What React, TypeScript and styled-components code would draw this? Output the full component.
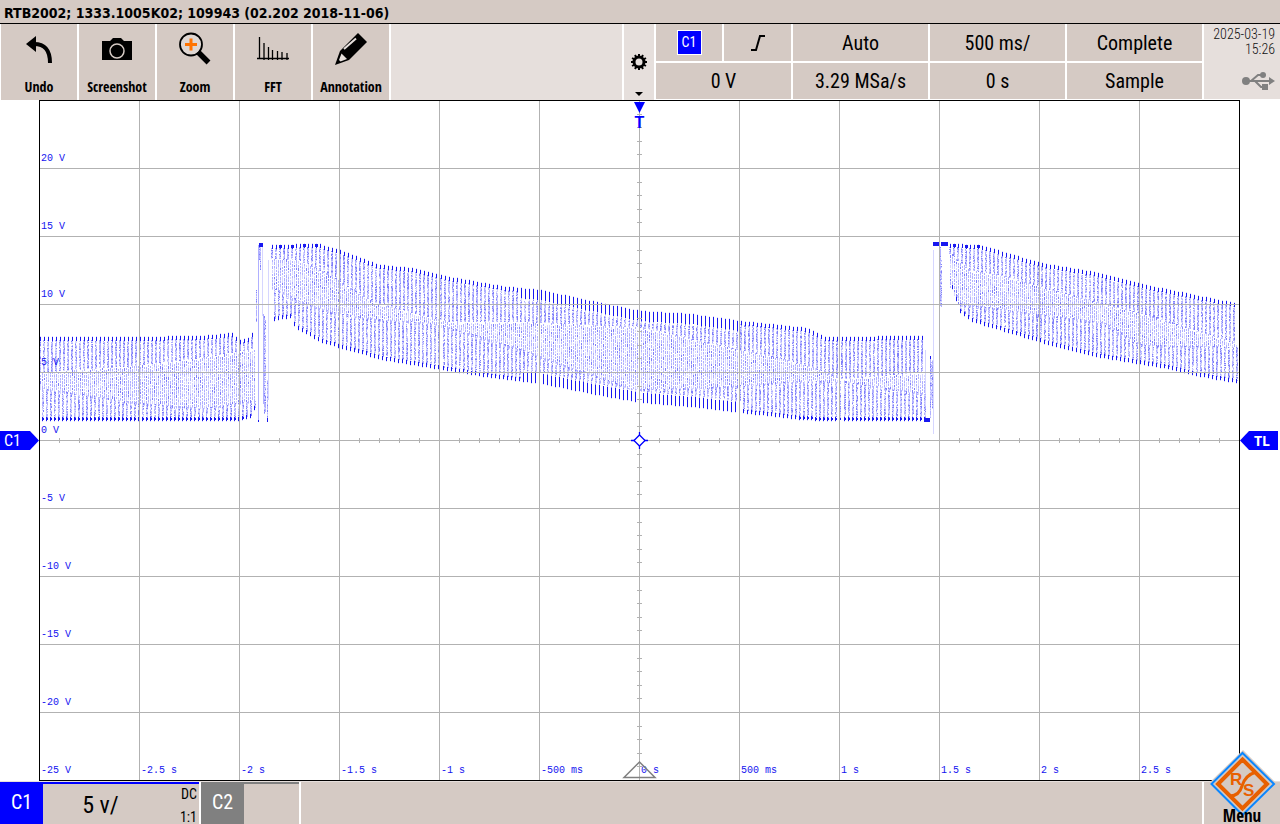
import React from "react";
import styled, { createGlobalStyle } from "styled-components";

const tan = "#d5cac4";
const pale = "#e6dfdc";
const blue = "#0000ff";
const grey = "#808080";
const orange = "#e86000";
const narrow = '"Roboto Condensed", "Arial Narrow", sans-serif';
const narrowBold = '"Open Sans Condensed", "Arial Narrow", sans-serif';

const Global = createGlobalStyle`
  * { box-sizing: border-box; }
  body { margin: 0; background: #fff; color: #000; font-family: ${narrow}; }
  button { font-family: inherit; color: inherit; border: 0; padding: 0; margin: 0; border-radius: 0; }
`;

const Screen = styled.div`
  display: flex;
  flex-direction: column;
  min-height: 100vh;
`;

const TitleBar = styled.h1`
  margin: 0;
  height: 24px;
  padding: 3px 4px 0;
  border-bottom: 1px solid #000;
  background: ${tan};
  font: bold 14px/20px "DejaVu Sans Condensed", Arial, sans-serif;
  white-space: nowrap;
`;

const Header = styled.header`
  display: flex;
  gap: 2px;
  height: 76px;
`;

const Tools = styled.nav`
  display: flex;
  gap: 2px;
  padding-left: 1px;
`;

const ToolButton = styled.button`
  display: flex;
  flex-direction: column;
  align-items: center;
  justify-content: space-between;
  width: 76px;
  padding: 8px 0 4px;
  background: ${tan};
  font-family: ${narrowBold};
  font-size: 14px;
  font-weight: bold;
  line-height: 18px;
`;

const Spare = styled.div`
  flex: 1;
  background: ${pale};
`;

const GearButton = styled.button`
  display: flex;
  flex-direction: column;
  align-items: center;
  justify-content: flex-end;
  gap: 22px;
  width: 30px;
  padding-bottom: 4px;
  background: ${pale};
`;

const Settings = styled.div`
  display: grid;
  grid-template-columns: repeat(4, 135px);
  grid-template-rows: 37px 36px;
  gap: 2px;
`;

const Pair = styled.div`
  display: grid;
  grid-template-columns: 66px 1fr;
  gap: 2px;
`;

const Setting = styled.button`
  display: flex;
  align-items: center;
  justify-content: center;
  background: ${tan};
  font-size: 20px;
  line-height: 24px;
`;

const SourceBadge = styled.span`
  width: 25px;
  height: 25px;
  border: 1px solid #fff;
  background: ${blue};
  color: #fff;
  font-size: 14px;
  line-height: 23px;
`;

const Status = styled.div`
  display: flex;
  flex-direction: column;
  justify-content: space-between;
  align-items: flex-end;
  width: 76px;
  height: 75px;
  padding: 3px 5px 8px 0;
  background: ${pale};
  color: #111;
  font-size: 14px;
  font-weight: 300;
  line-height: 15px;
  text-align: right;
  white-space: nowrap;
`;

const PlotRow = styled.main`
  display: flex;
  align-items: center;
`;

const Gutter = styled.div<{ $width: number }>`
  flex: none;
  width: ${(p) => p.$width}px;
`;

const Marker = styled.div<{ $side: "left" | "right" }>`
  width: ${(p) => (p.$side === "left" ? 39 : 38)}px;
  height: 19px;
  background: ${blue};
  color: #fff;
  font-family: ${(p) => (p.$side === "left" ? narrow : '"Open Sans", sans-serif')};
  font-size: ${(p) => (p.$side === "left" ? 16 : 14)}px;
  font-weight: ${(p) => (p.$side === "left" ? "normal" : "bold")};
  line-height: 19px;
  padding: ${(p) => (p.$side === "left" ? "0 0 0 4px" : "0 0 0 14px")};
  clip-path: ${(p) =>
    p.$side === "left"
      ? "polygon(0 0, 30px 0, 100% 50%, 30px 100%, 0 100%)"
      : "polygon(0 50%, 9px 0, 100% 0, 100% 100%, 9px 100%)"};
`;

const Plot = styled.svg`
  display: block;
  flex: 1;
  min-width: 0;
  height: auto;
`;

const AxisText = styled.text`
  fill: #1414f0;
  font-family: "Liberation Mono", monospace;
  font-size: 10px;
  white-space: pre;
`;

const Footer = styled.footer`
  display: flex;
  gap: 2px;
  flex: 1;
  min-height: 43px;
  border-top: 1px solid ${pale};
`;

const Channel = styled.button<{ $color: string; $width: number }>`
  display: flex;
  width: ${(p) => p.$width}px;
  border-top: 2px solid ${(p) => p.$color};
  background: ${tan};
`;

const ChannelName = styled.span<{ $color: string }>`
  width: 43px;
  height: 100%;
  background: ${(p) => p.$color};
  color: #fff;
  font-size: 20px;
  line-height: 36px;
`;

const Scale = styled.span`
  flex: 1;
  padding-right: 22px;
  font-size: 24px;
  line-height: 42px;
`;

const Coupling = styled.span`
  display: flex;
  flex-direction: column;
  justify-content: space-between;
  height: 100%;
  padding: 2px 2px 1px 0;
  font-size: 14px;
  line-height: 16px;
  text-align: right;
`;

const FooterSpace = styled.div`
  flex: 1;
  background: ${tan};
`;

const MenuButton = styled.button`
  position: relative;
  width: 76px;
  background: ${tan};
`;

const MenuLogo = styled.svg`
  position: absolute;
  left: 0;
  bottom: 0;
`;

const MenuText = styled.span`
  position: absolute;
  left: 0;
  right: 0;
  bottom: 0;
  font-family: ${narrowBold};
  font-size: 17px;
  font-weight: bold;
  line-height: 20px;
`;

type Points = [number, number][];

/** Linear interpolation along a list of [x, y] points. */
function at(points: Points, x: number): number {
  if (x <= points[0][0]) return points[0][1];
  for (let i = 1; i < points.length; i++) {
    const [x1, y1] = points[i];
    if (x <= x1) {
      const [x0, y0] = points[i - 1];
      return y0 + ((y1 - y0) * (x - x0)) / (x1 - x0);
    }
  }
  return points[points.length - 1][1];
}

interface Burst {
  from: number;
  to: number;
  top: Points;
  coreTop: Points;
  coreBottom: Points;
  bottom: Points;
}

const bursts: Burst[] = [
  {
    from: 0,
    to: 215,
    top: [[0, 237], [90, 237], [160, 236], [194, 233], [200, 240], [211, 238], [217, 222]],
    coreTop: [[0, 272], [90, 266], [160, 258], [217, 248]],
    coreBottom: [[0, 288], [90, 302], [160, 308], [217, 300]],
    bottom: [[0, 321], [196, 321], [210, 318], [217, 300]],
  },
  {
    from: 229,
    to: 884,
    top: [[229, 145], [280, 144], [300, 150], [340, 165], [371, 168], [411, 177], [461, 186], [501, 190], [561, 203], [601, 211], [651, 214], [701, 221], [768, 228], [786, 237], [886, 236]],
    coreTop: [[229, 158], [260, 160], [290, 175], [334, 202], [371, 212], [414, 222], [491, 222], [601, 227], [661, 241], [701, 250], [741, 258], [781, 270], [801, 279], [886, 272]],
    coreBottom: [[229, 186], [260, 202], [290, 212], [334, 219], [391, 223], [431, 234], [481, 250], [521, 265], [551, 274], [591, 289], [661, 288], [701, 285], [761, 281], [801, 281], [886, 294]],
    bottom: [[229, 224], [235, 220], [250, 218], [254, 228], [281, 243], [341, 260], [401, 270], [451, 278], [501, 284], [561, 296], [601, 303], [661, 308], [701, 313], [761, 320], [786, 321], [886, 321]],
  },
  {
    from: 907,
    to: 1198,
    top: [[907, 144], [940, 145], [961, 151], [1001, 163], [1061, 173], [1121, 188], [1200, 204]],
    coreTop: [[907, 150], [930, 170], [961, 175], [1031, 195], [1101, 213], [1200, 244]],
    coreBottom: [[907, 180], [920, 204], [1061, 222], [1101, 245], [1200, 247]],
    bottom: [[907, 187], [913, 190], [917, 212], [931, 222], [961, 231], [1001, 243], [1061, 258], [1121, 268], [1161, 277], [1200, 284]],
  },
];

const shades = ["#d6d6ff", "#b0b0ff", "#8080f8", "#1818f0"];

const PERIOD = 4.01;

/** Builds one path per shade; every sample is a short vertical pixel run. */
function buildTrace(): string[] {
  const parts: string[][] = shades.map(() => []);
  let seed = 7;
  const rand = () => {
    seed = (seed * 1103515245 + 12345) & 0x7fffffff;
    return (seed >> 8) / 0x7fffff;
  };
  const dot = (shade: number, x: number, y: number, h = 1, w = 1) => {
    parts[shade].push(`M${x} ${Math.round(y)}h${w}v${h}h-${w}z`);
  };
  const noisy = (x: number, y0: number, y1: number, density: number) => {
    for (let y = Math.round(y0); y < y1; y++) {
      if (rand() > density) continue;
      const k = rand();
      dot(k < 0.34 ? 0 : k < 0.8 ? 1 : 2, x, y);
    }
  };
  const dashes = (x: number, y0: number, y1: number) => {
    let y = Math.round(y0 + rand() * 3);
    while (y < y1) {
      const k = rand();
      const h = rand() < 0.7 ? 2 : 3;
      dot(k < 0.25 ? 0 : k < 0.88 ? 1 : 2, x, y, h);
      y += h;
      if (rand() < 0.5) dot(0, x, y);
      y += 1;
    }
  };

  for (const b of bursts) {
    for (let n = Math.ceil(b.from / PERIOD); n * PERIOD < b.to; n++) {
      const x = Math.round(n * PERIOD - 0.5) + 1;
      const top = at(b.top, x);
      const coreTop = at(b.coreTop, x);
      const coreBottom = at(b.coreBottom, x);
      const bottom = at(b.bottom, x);
      const thin = x > 480 && x < 700;
      const tip = thin ? 10 : 4;

      dot(0, x, top - 1, 1);
      dot(3, x, top, tip);
      if (top < 145.5 && n % 3 === 0) dot(3, x - 1, top, 3, 3);
      noisy(x, top + tip, coreTop, 0.95);
      noisy(x - 1, top + (thin ? 12 : 3), coreTop, 0.88);

      dashes(x, coreTop, coreBottom);
      dashes(x + 2, coreTop, coreBottom);

      noisy(x + 2, coreBottom, bottom - tip, 0.95);
      if (x + 3 < 1200) noisy(x + 3, coreBottom, bottom - (thin ? 12 : 3), 0.85);
      dot(3, x + 2, bottom - tip, tip);
      dot(0, x + 2, bottom, 1);
      if (bottom > 319.5) dot(3, x + 2, bottom - 3, 2, 2);
    }
  }

  // First step: jump to the rail, a short drop, then the second jump.
  noisy(217, 190, 222, 1);
  dot(1, 219, 145, 177);
  dot(3, 219, 320, 2);
  dot(3, 220, 143, 4, 4);
  noisy(221, 147, 170, 1);
  noisy(220, 147, 160, 1);
  dot(0, 223, 146, 70);
  dot(1, 224, 214, 90);
  noisy(225, 216, 314, 1);
  noisy(226, 220, 312, 0.8);
  noisy(228, 280, 322, 1);
  dot(3, 228, 318, 4);
  dot(0, 229, 160, 140);

  // Second step: bottom rail, partial rise, then the top rail.
  dot(3, 885, 318, 4, 6);
  dot(0, 886, 250, 70);
  noisy(891, 256, 318, 1);
  noisy(892, 262, 300, 0.8);
  dot(3, 891, 256, 3);
  noisy(893, 260, 309, 1);
  dot(0, 894, 150, 184);
  dot(3, 894, 142, 4, 7);
  dot(3, 902, 142, 4, 7);
  noisy(901, 147, 206, 1);
  noisy(902, 160, 207, 0.8);

  return parts.map((p) => p.join(""));
}

const trace = buildTrace();

const gridLines = () => {
  let d = "";
  for (let i = 1; i < 12; i++) d += `M${i * 100 + 0.5} 1V680`;
  for (let i = 1; i < 10; i++) d += `M1 ${i * 68 + 0.5}H1200`;
  for (let i = 1; i < 60; i++) d += `M${i * 20 + 0.5} 338V343`;
  for (let i = 1; i < 50; i++) d += `M598 ${Math.round(i * 13.6) + 0.5}H603`;
  return d;
};

const voltLabels = ["20 V", "15 V", "10 V", "5 V", "0 V", "-5 V", "-10 V", "-15 V", "-20 V"];
const timeLabels = ["-25 V", "-2.5 s", "-2 s", "-1.5 s", "-1 s", "-500 ms", "0 s", "500 ms", "1 s", "1.5 s", "2 s", "2.5 s"];

const Scope = () => (
  <Plot viewBox="0 0 1201 681" role="img" aria-label="Channel 1 waveform">
    <g shapeRendering="crispEdges">
      {trace.map((d, i) => (
        <path key={shades[i]} d={d} fill={shades[i]} />
      ))}
      <path d={gridLines()} stroke="#b2b2b2" fill="none" />
      <rect x="0.5" y="0.5" width="1200" height="680" fill="none" stroke="#000" />
    </g>
    {voltLabels.map((t, i) => (
      <AxisText key={t} x="2" y={61 + i * 68}>{t}</AxisText>
    ))}
    {timeLabels.map((t, i) => (
      <AxisText key={t} x={i * 100 + 2} y={673}>{t}</AxisText>
    ))}
    <path d="M595 2H606L600.500 13Z" fill={blue} />
    <text x="600.500" y="28" textAnchor="middle" fontFamily="Liberation Sans, sans-serif" fontWeight="bold" fontSize="16" fill={blue}>T</text>
    <path d="M600.500 335L606 340.500L600.500 346L595 340.500Z" fill="#fff" stroke={blue} strokeWidth="1.300" />
    <path d="M600.500 332V336M600.500 345V349M592 340.500H596M605 340.500H609" stroke={blue} strokeWidth="1.300" />
    <path d="M600.500 662L616 677.500H585Z" fill="none" stroke={grey} strokeWidth="1.500" />
  </Plot>
);

const Icon = ({ children }: { children: React.ReactNode }) => (
  <svg width="40" height="36" viewBox="0 0 40 36" fill="none" aria-hidden="true">
    {children}
  </svg>
);

const tools: { name: string; icon: React.ReactNode }[] = [
  {
    name: "Undo",
    icon: (
      <>
        <path d="M7 12L17 4V20Z" fill="#000" />
        <path d="M15 12C26 12 31 18 31 31" stroke="#000" strokeWidth="4" />
      </>
    ),
  },
  {
    name: "Screenshot",
    icon: (
      <>
        <path d="M5 9H13L16 6H24L27 9H35V28H5Z" fill="#000" />
        <circle cx="20" cy="19" r="7" stroke={tan} strokeWidth="1.500" />
      </>
    ),
  },
  {
    name: "Zoom",
    icon: (
      <>
        <circle cx="16" cy="12.500" r="11" fill="#dfd7d3" stroke="#000" strokeWidth="1.800" />
        <path d="M10 12.500H22M16 6.500V18.500" stroke="#ff7300" strokeWidth="3" />
        <path d="M23 20L33.500 30.500" stroke="#000" strokeWidth="5.500" />
      </>
    ),
  },
  {
    name: "FFT",
    icon: (
      <path
        d="M4 26.500H36M6.500 5V27M11 11V28M15.500 15V28M19.500 18V28M24.500 19V28M29 20V28M34 21V28"
        stroke="#000"
        strokeWidth="1.300"
      />
    ),
  },
  {
    name: "Annotation",
    icon: (
      <>
        <path d="M27 1L36 10L18 28L4 33L9 19Z" fill="#000" />
        <path d="M13 17L25 6.500" stroke={pale} strokeWidth="2" />
        <path d="M10.500 21.500L16 27L9.500 29.500L8 28Z" fill={pale} />
      </>
    ),
  },
];

const teeth = Array.from({ length: 12 }, (_, i) => i * 30);

const RsLogo = () => (
  <MenuLogo width="76" height="76" viewBox="0 0 76 76" aria-hidden="true">
    <path d="M39 0L77 38V44H0V38Z" fill={tan} />
    <path d="M38.500 3L70 34L38.500 65L7.500 34Z" fill={tan} stroke="#0a86ff" strokeWidth="2" />
    <path d="M38.500 9.500L63 34L38.500 58.500L14 34Z" fill="none" stroke={orange} strokeWidth="4" />
    <path d="M26 46C32 46 36 43 38 36C40 29 45 24 52 22" fill="none" stroke={orange} strokeWidth="3" />
    <text x="26" y="35" fontFamily="Liberation Sans, sans-serif" fontWeight="bold" fontSize="17" fill={orange}>R</text>
    <text x="39" y="46" fontFamily="Liberation Sans, sans-serif" fontWeight="bold" fontSize="17" fill={orange}>S</text>
  </MenuLogo>
);

export default function App() {
  return (
    <Screen>
      <Global />
      <TitleBar>RTB2002; 1333.1005K02; 109943 (02.202 2018-11-06)</TitleBar>
      <Header>
        <Tools>
          {tools.map((t) => (
            <ToolButton key={t.name}>
              <Icon>{t.icon}</Icon>
              {t.name}
            </ToolButton>
          ))}
        </Tools>
        <Spare />
        <GearButton aria-label="Toolbar settings">
          <svg width="16" height="16" viewBox="-8 -8 16 16" aria-hidden="true">
            <circle r="5" fill="none" stroke="#000" strokeWidth="3" />
            {teeth.map((a) => (
              <rect key={a} x="-1" y="-8" width="2" height="3" transform={`rotate(${a})`} />
            ))}
          </svg>
          <svg width="8" height="4" viewBox="0 0 8 4" aria-hidden="true">
            <path d="M0 0H8L4 4Z" />
          </svg>
        </GearButton>
        <Settings>
          <Pair>
            <Setting>
              <SourceBadge>C1</SourceBadge>
            </Setting>
            <Setting aria-label="Rising edge">
              <svg width="14" height="18" viewBox="0 0 14 18" fill="none" aria-hidden="true">
                <path d="M0 16H5L9 2H14" stroke="#000" strokeWidth="2" />
              </svg>
            </Setting>
          </Pair>
          <Setting>Auto</Setting>
          <Setting>500 ms/</Setting>
          <Setting>Complete</Setting>
          <Setting>0 V</Setting>
          <Setting>3.29 MSa/s</Setting>
          <Setting>0 s</Setting>
          <Setting>Sample</Setting>
        </Settings>
        <Status>
          <div>
            2025-03-19
            <br />
            15:26
          </div>
          <svg width="34" height="20" viewBox="0 0 34 20" fill="none" aria-label="USB">
            <circle cx="5" cy="10" r="4" fill={grey} />
            <path d="M5 10H30M10 10L17 4H22M14 10L20 16H24" stroke={grey} strokeWidth="2" />
            <path d="M28 6L34 10L28 14Z" fill={grey} />
            <circle cx="22" cy="4" r="3" fill={grey} />
            <rect x="21" y="13" width="6" height="6" fill={grey} />
          </svg>
        </Status>
      </Header>
      <PlotRow>
        <Gutter $width={39}>
          <Marker $side="left">C1</Marker>
        </Gutter>
        <Scope />
        <Gutter $width={40}>
          <Marker $side="right">TL</Marker>
        </Gutter>
      </PlotRow>
      <Footer>
        <Channel $color={blue} $width={199}>
          <ChannelName $color={blue}>C1</ChannelName>
          <Scale>5 v/</Scale>
          <Coupling>
            <span>DC</span>
            <span>1:1</span>
          </Coupling>
        </Channel>
        <Channel $color={grey} $width={98}>
          <ChannelName $color={grey}>C2</ChannelName>
        </Channel>
        <FooterSpace />
        <MenuButton>
          <RsLogo />
          <MenuText>Menu</MenuText>
        </MenuButton>
      </Footer>
    </Screen>
  );
}
